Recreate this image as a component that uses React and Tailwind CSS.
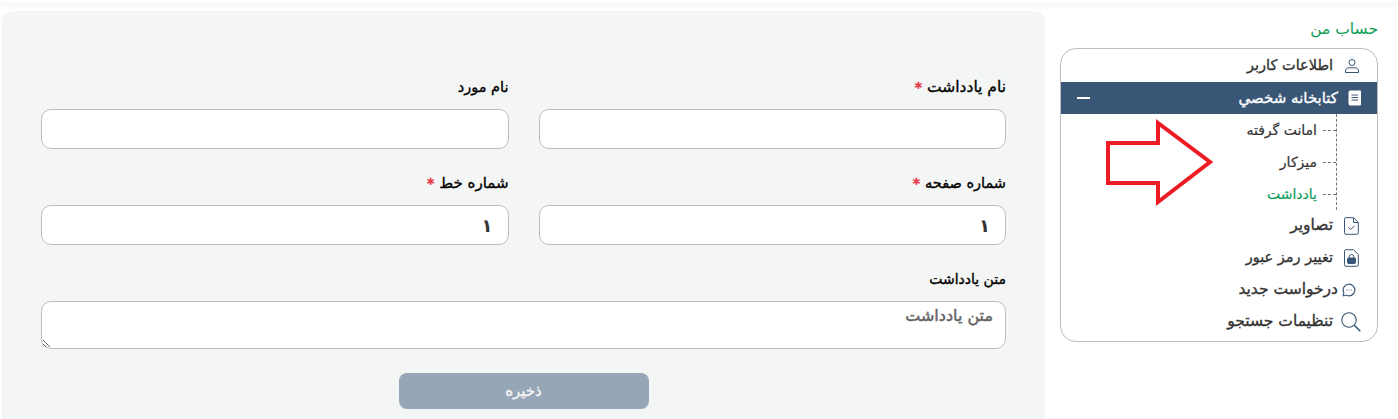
import React from 'react';
import { MessageCircleMore } from 'lucide-react';

const font = 'font-["DejaVu_Sans","Noto_Sans",sans-serif]';

const UserIcon = () => (
  <svg width="16" height="16" viewBox="0 0 16 16" fill="none" stroke="#3a5676" strokeWidth="1">
    <circle cx="8" cy="4.500" r="3" />
    <path d="M1.500 14.500v-1.500c0-2 1.600-3.200 3.500-3.200h6c1.900 0 3.500 1.200 3.500 3.200v1.500z" />
  </svg>
);

const BookIcon = () => (
  <svg width="13" height="16" viewBox="0 0 13 16">
    <path d="M2.500.5H12a1 1 0 0 1 1 1v13a1 1 0 0 1-1 1H2.500A2 2 0 0 1 .5 13.500v-11a2 2 0 0 1 2-2z" fill="#fff" />
    <path d="M3.500 5h6.500M3.500 7.500h6.500M3.500 10h6.500" stroke="#3a5676" strokeWidth="1" />
  </svg>
);

const FileCheckIcon = () => (
  <svg width="15" height="18" viewBox="0 0 15 18" fill="none" stroke="#3a5676" strokeWidth="1">
    <path d="M2 .7h7.500l4.800 4.800v10.300a1.500 1.500 0 0 1-1.500 1.500H2a1.500 1.500 0 0 1-1.500-1.500V2.200A1.500 1.500 0 0 1 2 .7z" />
    <path d="M9.500.7v4.800h4.800" />
    <path d="M4.500 10.500l2 2 4-3.500" />
  </svg>
);

const FileLockIcon = () => (
  <svg width="15" height="18" viewBox="0 0 15 18" fill="none" stroke="#3a5676" strokeWidth="1">
    <path d="M2 .7h7.500l4.800 4.800v10.300a1.500 1.500 0 0 1-1.500 1.500H2a1.500 1.500 0 0 1-1.500-1.500V2.200A1.500 1.500 0 0 1 2 .7z" />
    <path d="M5.200 9V7.800a2.300 2.300 0 0 1 4.600 0V9" />
    <rect x="3.500" y="9" width="8" height="5.500" rx="1" fill="#3a5676" />
  </svg>
);

const SearchIcon = () => (
  <svg width="20" height="20" viewBox="0 0 20 20" fill="none" stroke="#3a5676" strokeLinecap="round">
    <circle cx="8" cy="8" r="7.200" strokeWidth="1.100" />
    <path d="M13.300 13.300l5.500 5.500" strokeWidth="1.600" />
  </svg>
);

const subItems = [
  { label: 'امانت گرفته', active: false },
  { label: 'میزکار', active: false },
  { label: 'یادداشت', active: true },
];

const stroke = '[-webkit-text-stroke:0.35px_currentColor]';

const MenuRow = ({ label, icon, pad, gap, size }) => (
  <div className={`flex h-8 items-center text-[#333] ${stroke} ${pad} ${gap} ${size}`}>
    {icon}
    <span>{label}</span>
  </div>
);

const Field = ({ label, required, value, size }) => (
  <div className="flex flex-1 flex-col">
    <label className={`mb-[15px] h-[11px] leading-[9px] text-black ${stroke} ${size}`}>
      {label}
      {required && <span className="mr-[5px] text-[14px] font-bold text-[#e8303f]">*</span>}
    </label>
    <input
      readOnly
      value={value || ''}
      className="h-10 rounded-[10px] border border-[#bdbdbd] bg-white px-[15px] text-[18px] font-bold text-[#333] outline-none"
    />
  </div>
);

export default function App() {
  return (
    <div dir="rtl" className={`relative h-[419px] w-[1398px] overflow-hidden bg-white ${font}`}>
      <div className="h-[2px] bg-white shadow-[0_2px_6px_rgba(0,0,0,0.12)]" />
      <div className="flex gap-[15px] pr-5 pt-[9px]">
        <aside className="w-[318px] pt-[9px]">
          <h2 className="mb-[10px] h-[18px] text-[15.5px] leading-[18px] text-[#0f9d58]">حساب من</h2>
          <nav className="h-[294px] rounded-[16px] border border-[#bdbdbd] bg-white">
            <div className={`flex h-[33px] items-center gap-[11px] pr-[17px] text-[14.500px] text-[#333] ${stroke}`}>
              <UserIcon />
              <span>اطلاعات کاربر</span>
            </div>
            <div className={`flex h-8 items-center bg-[#3a5676] pl-[16px] pr-[16px] text-[15px] text-white ${stroke}`}>
              <span className="ml-[10px]"><BookIcon /></span>
              <span>کتابخانه شخصي</span>
              <span className="mr-auto h-[2px] w-[13px] bg-white" />
            </div>
            <ul className="mr-[40px] h-[96px] border-r border-dashed border-[#777]">
              {subItems.map((s) => (
                <li key={s.label} className="flex h-[32px] items-center text-[14px] [-webkit-text-stroke:0.2px_currentColor]">
                  <span className="ml-[6px] w-[13px] border-t border-dashed border-[#777]" />
                  <span className={s.active ? 'text-[#0f9d58]' : 'text-[#333]'}>{s.label}</span>
                </li>
              ))}
            </ul>
            <MenuRow label="تصاویر" icon={<FileCheckIcon />} pad="pr-[18px]" gap="gap-[11px]" size="text-[15.500px]" />
            <MenuRow label="تغییر رمز عبور" icon={<FileLockIcon />} pad="pr-[18px]" gap="gap-[11px]" size="text-[14.500px]" />
            <MenuRow label="درخواست جدید" icon={<MessageCircleMore size={14} color="#3a5676" />} pad="pr-[21px]" gap="gap-[4px]" size="text-[15.500px]" />
            <MenuRow label="تنظیمات جستجو" icon={<SearchIcon />} pad="pr-[16px]" gap="gap-[8px]" size="text-[15.500px]" />
          </nav>
        </aside>
        <main className="h-[420px] w-[1043px] rounded-[10px] bg-[#f4f6f5] px-[39px] pt-[72px]">
          <div className="flex gap-[30px]">
            <Field label="نام یادداشت" required size="text-[15.500px]" />
            <Field label="نام مورد" size="text-[14.500px]" />
          </div>
          <div className="mt-[30px] flex gap-[30px]">
            <Field label="شماره صفحه" required value="۱" size="text-[14.500px]" />
            <Field label="شماره خط" required value="۱" size="text-[15px]" />
          </div>
          <div className="mt-[30px]">
            <label className={`mb-[15px] block h-[11px] text-[14px] leading-[9px] text-black ${stroke}`}>متن یادداشت</label>
            <textarea
              readOnly
              placeholder="متن یادداشت"
              className="block h-12 w-[965px] rounded-[10px] border border-[#bdbdbd] bg-white px-3 py-[2px] text-[16px] outline-none placeholder:text-[#666] [-webkit-text-stroke:0.5px_#666]"
            />
          </div>
          <button className={`mx-auto mt-6 block h-9 w-[250px] rounded-[8px] bg-[#97a6b6] text-[15px] text-[#f4f6f5] ${stroke}`}>
            ذخیره
          </button>
        </main>
      </div>
      {/* annotation arrow on top of the menu */}
      <svg className="absolute left-[1100px] top-[115px]" width="120" height="95" viewBox="1100 115 120 95" fill="#fff" stroke="#ed1c24" strokeWidth="4">
        <path d="M1158 123v20h-50v40h50v19l52-40z" />
      </svg>
    </div>
  );
}
